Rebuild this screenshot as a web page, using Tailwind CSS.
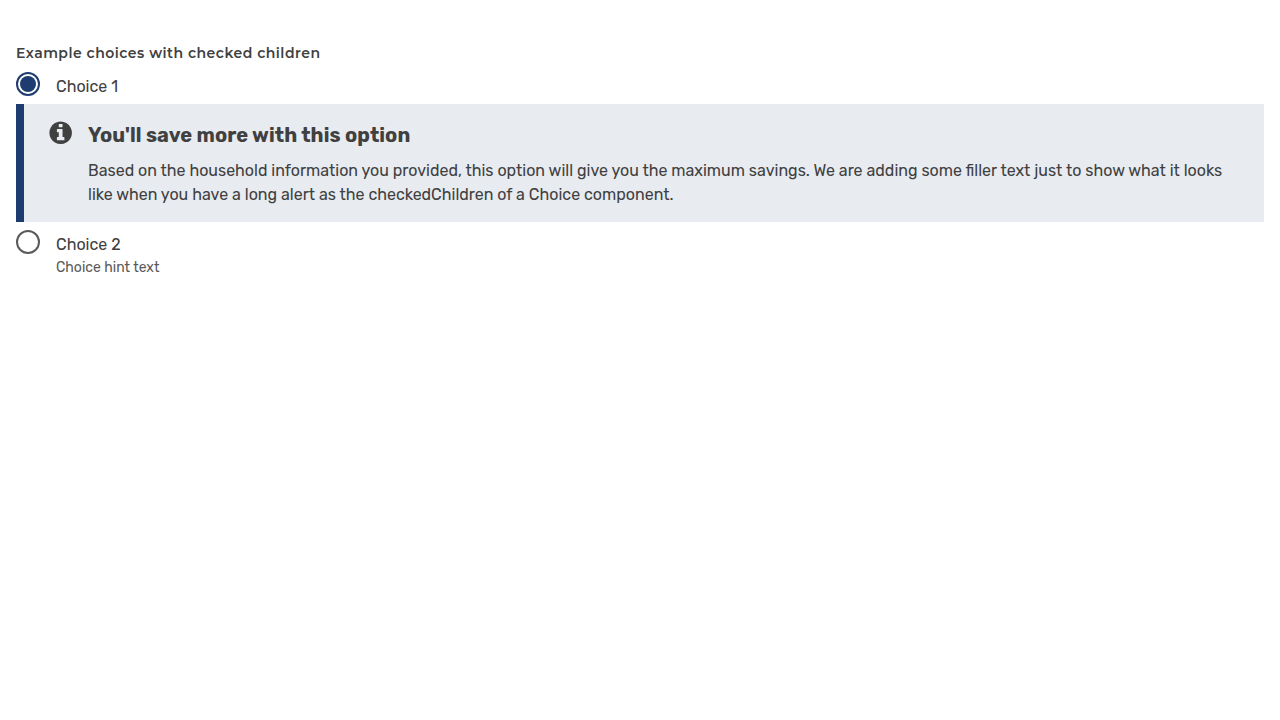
<!DOCTYPE html>
<html lang="en">
<head>
<meta charset="utf-8">
<title>Choices</title>
<script src="https://cdn.jsdelivr.net/npm/@tailwindcss/browser@4"></script>
</head>
<body class="bg-white font-[Rubik,Roboto,sans-serif] text-[#404040] antialiased">
<fieldset class="px-4 pt-[41px]">
<legend class="contents"><span class="block w-fit whitespace-nowrap font-[Montserrat,Inter,sans-serif] text-[14px] leading-6 font-semibold tracking-[0.5px]">Example choices with checked children</span></legend>
<div class="mt-[7px] flex h-8 gap-4">
<span class="flex size-6 shrink-0 items-center justify-center rounded-full border-2 border-[#1e3c70] bg-white"><span class="size-4 rounded-full bg-[#1e3c70]"></span></span>
<label class="pt-[3px] text-base leading-6">Choice 1</label>
</div>
<div class="flex h-[118px] border-l-8 border-[#1e3c70] bg-[#e8ebf0] pt-4 pl-[23px]">
<svg class="mr-[15px] size-[26px] shrink-0" viewBox="-34 24 1770 1770" fill="#404040"><path d="M1152 1376v-160q0-14-9-23t-23-9h-96v-512q0-14-9-23t-23-9h-320q-14 0-23 9t-9 23v160q0 14 9 23t23 9h96v320h-96q-14 0-23 9t-9 23v160q0 14 9 23t23 9h448q14 0 23-9t9-23zm-128-896v-160q0-14-9-23t-23-9h-192q-14 0-23 9t-9 23v160q0 14 9 23t23 9h192q14 0 23-9t9-23zm640 416q0 209-103 385.5t-279.5 279.5-385.5 103-385.5-103-279.5-279.5-103-385.5 103-385.5 279.5-279.5 385.5-103 385.5 103 279.5 279.5 103 385.5z"/></svg>
<div class="whitespace-nowrap">
<h2 class="text-xl leading-[30px] font-bold tracking-[0.075px]">You'll save more with this option</h2>
<p class="mt-[9px] text-base leading-6">Based on the household information you provided, this option will give you the maximum savings. We are adding some filler text just to show what it looks<br>like when you have a long alert as the checkedChildren of a Choice component.</p>
</div>
</div>
<div class="mt-2 flex gap-4">
<span class="size-6 shrink-0 rounded-full border-2 border-[#5a5a5a] bg-white"></span>
<label class="pt-[3px] text-base leading-6">Choice 2<span class="block text-sm leading-[21px] text-[#5a5a5a]">Choice hint text</span></label>
</div>
</fieldset>
</body>
</html>
